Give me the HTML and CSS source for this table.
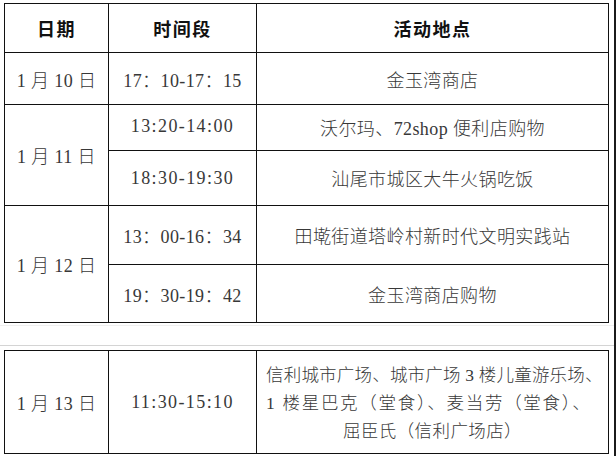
FILE: index.html
```html
<!DOCTYPE html>
<html lang="zh-CN">
<head>
<meta charset="utf-8">
<title>活动轨迹</title>
<link rel="stylesheet" href="styles.css">
</head>
<body>
<div class="page">
  <table class="grid">
    <colgroup>
      <col class="c1"><col class="c2"><col class="c3">
    </colgroup>
    <tr class="h-head">
      <th>日期</th><th>时间段</th><th>活动地点</th>
    </tr>
    <tr class="h-r1">
      <td>1 月 10 日</td><td>17：10-17：15</td><td>金玉湾商店</td>
    </tr>
    <tr class="h-r2">
      <td rowspan="2" class="date-11">1 月 11 日</td><td class="up hw">13:20-14:00</td><td class="up">沃尔玛、72shop 便利店购物</td>
    </tr>
    <tr class="h-r3">
      <td class="hw">18:30-19:30</td><td>汕尾市城区大牛火锅吃饭</td>
    </tr>
    <tr class="h-r4">
      <td rowspan="2">1 月 12 日</td><td>13：00-16：34</td><td>田墘街道塔岭村新时代文明实践站</td>
    </tr>
    <tr class="h-r5">
      <td>19：30-19：42</td><td>金玉湾商店购物</td>
    </tr>
  </table>
  <div class="gap">
    <div class="rule faint"></div>
    <div class="rule"></div>
  </div>
  <table class="grid">
    <colgroup>
      <col class="c1"><col class="c2"><col class="c3">
    </colgroup>
    <tr class="h-r6">
      <td>1 月 13 日</td><td class="hw">11:30-15:10</td>
      <td class="places">
        <div class="line l1">信利城市广场、城市广场 3 楼儿童游乐场、</div>
        <div class="line l2">1 楼星巴克（堂食）、麦当劳（堂食）、</div>
        <div class="line l3">屈臣氏（信利广场店）</div>
      </td>
    </tr>
  </table>
</div>
</body>
</html>
```

FILE: styles.css
```css
html, body {
  margin: 0;
  padding: 0;
  background: #ffffff;
}
.page {
  box-sizing: border-box;
  width: 616px;
  height: 456px;
  overflow: hidden;
  padding: 3px 0 0 4px;
  border-right: 2px solid #1b1b1b;
  background: #ffffff;
  font-family: "Liberation Serif", "Noto Sans CJK SC", serif;
  color: #383838;
}
.grid {
  border-collapse: collapse;
  table-layout: fixed;
  width: 604px;
}
.c1 { width: 104px; }
.c2 { width: 148px; }
.c3 { width: 352px; }
.grid th, .grid td {
  border: 1px solid #111;
  padding: 0;
  text-align: center;
  vertical-align: middle;
  font-size: 18px;
  font-weight: 300;
  white-space: nowrap;
  letter-spacing: 0.4px;
}
.grid th {
  font-family: "Noto Sans CJK SC", sans-serif;
  font-weight: 700;
  color: #111;
  font-size: 18px;
  letter-spacing: 1.5px;
}
.grid td.hw { letter-spacing: 1.4px; }
.h-head { height: 49px; }
.h-r1 { height: 52px; }
.h-r2 { height: 46px; }
.h-r3 { height: 55px; }
.h-r4 { height: 59px; }
.h-r5 { height: 58px; }
.h-r6 { height: 103px; }
.grid td.up { padding-bottom: 2px; }
.date-11 { padding-top: 2px; }
.gap {
  height: 27px;
  margin-left: -4px;
  width: 614px;
  display: flex;
  flex-direction: column;
  justify-content: space-between;
  padding: 2px 0 4px;
  box-sizing: border-box;
}
.rule {
  height: 1px;
  background: #d4d4d4;
}
.rule.faint {
  background: #efefef;
}
.grid td.places {
  line-height: 28px;
  padding: 2px 0 0 9px;
  text-align: left;
}
.line {
  font-size: 17.5px;
}
.l1 { letter-spacing: 0.2px; }
.l2 { letter-spacing: 1.7px; }
.l3 { text-align: center; padding-right: 9px; }
```
